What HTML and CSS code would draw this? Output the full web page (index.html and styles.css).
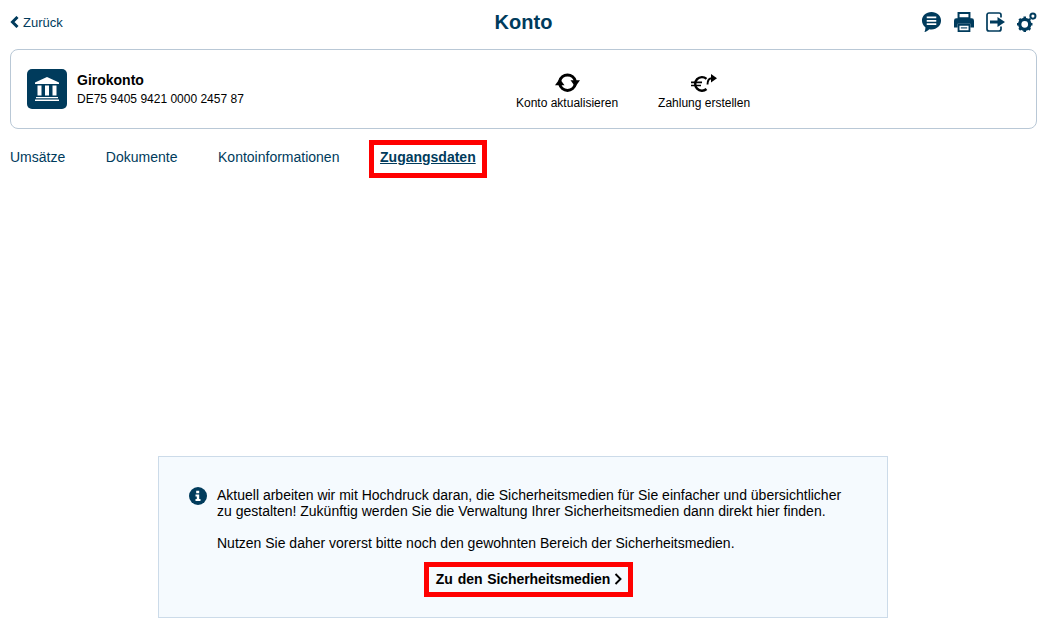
FILE: index.html
```html
<!DOCTYPE html>
<html lang="de">
<head>
<meta charset="utf-8">
<title>Konto</title>
<link rel="stylesheet" href="styles.css">
</head>
<body>
<header class="topbar">
  <a class="back" href="#">
    <svg class="back-icon" viewBox="0 0 9 12" width="9" height="12"><path d="M7.500 1 2.500 6l5 5" fill="none" stroke="#003b5c" stroke-width="3"/></svg>
    <span>Zurück</span>
  </a>
  <h1 class="title">Konto</h1>
  <div class="tools">
    <svg class="tool" viewBox="0 0 22 24" width="21" height="23"><path d="M11 1C5.200 1 1 4.800 1 10c0 3 1.400 5.400 3.600 7 .1 1.700-.3 3.500-1 5 1.900-.4 3.700-1.500 5-3 .8.200 1.600.3 2.400.3 5.800 0 10-4.100 10-9.300S16.800 1 11 1Z" fill="#003b5c"/><path d="M6 6.700h10M6 10.200h10M6 13.700h10" stroke="#fff" stroke-width="1.800"/></svg>
    <svg class="tool" viewBox="0 0 22 22" width="20" height="20"><path d="M5 1h12v6H5z" fill="none" stroke="#003b5c" stroke-width="2.200"/><path d="M2.500 7h17A2.500 2.500 0 0 1 22 9.500V17h-4v-4H4v4H0V9.500A2.500 2.500 0 0 1 2.500 7Z" fill="#003b5c"/><path d="M5 14h12v7H5z" fill="#fff" stroke="#003b5c" stroke-width="2"/><path d="M7.500 17.500h7" stroke="#003b5c" stroke-width="1.200"/></svg>
    <svg class="tool" viewBox="0 0 19 20" width="19" height="20"><path d="M15 5.500V3a2 2 0 0 0-2-2H3a2 2 0 0 0-2 2v14a2 2 0 0 0 2 2h10a2 2 0 0 0 2-2v-2.500" fill="none" stroke="#003b5c" stroke-width="1.700"/><path d="M4 8.500h7.500V5l7.500 5-7.500 5v-3.500H4Z" fill="#003b5c"/></svg>
    <svg class="tool" viewBox="0 0 22 22" width="20" height="20"><circle cx="8.500" cy="13.500" r="5.500" fill="none" stroke="#003b5c" stroke-width="3.600"/><path d="M8.500 5v3M8.500 19v3M0 13.500h3M14 13.500h3M2.500 7.500l2 2M12.500 17.500l2 2M2.500 19.500l2-2M12.500 9.500l2-2" stroke="#003b5c" stroke-width="2.800"/><circle cx="17.500" cy="4.500" r="2.800" fill="none" stroke="#003b5c" stroke-width="2.200"/></svg>
  </div>
</header>

<section class="card">
  <div class="account">
    <div class="bank-logo">
      <svg viewBox="0 0 40 40" width="40" height="40"><path d="M20 8 8 13.500V15h24v-1.500Z" fill="#fff"/><path d="M10.500 16.500h4v10h-4zM18 16.500h4v10h-4zM25.500 16.500h4v10h-4z" fill="#fff"/><path d="M9 28h22v1.300H9zM8 30.500h24v1.500H8z" fill="#fff"/></svg>
    </div>
    <div>
      <div class="account-name">Girokonto</div>
      <div class="iban">DE75 9405 9421 0000 2457 87</div>
    </div>
  </div>
  <div class="actions">
    <a class="action" href="#">
      <svg viewBox="0 -2.200 25 22" width="25" height="22"><path d="M4.700 8A8 8 0 0 1 20.300 8" fill="none" stroke="#000" stroke-width="3"/><path d="M15.500 7 25 7 20.300 13.500Z" fill="#000"/><path d="M20.300 11A8 8 0 0 1 4.700 11" fill="none" stroke="#000" stroke-width="3"/><path d="M0 12 9.500 12 4.700 5.500Z" fill="#000"/></svg>
      <span>Konto aktualisieren</span>
    </a>
    <a class="action" href="#">
      <svg viewBox="0 -3 26 22" width="26" height="22"><path d="M15.500 4.800A6.800 6.800 0 1 0 15.500 15" fill="none" stroke="#000" stroke-width="2.400"/><path d="M0 8.300h11M0 11.500h10" stroke="#000" stroke-width="1.700"/><path d="M16.500 10.500C16.500 6.500 18 4.300 21 4.300" fill="none" stroke="#000" stroke-width="1.900"/><path d="M20 0 26 4.200l-6 4.200Z" fill="#000"/></svg>
      <span>Zahlung erstellen</span>
    </a>
  </div>
</section>

<nav class="tabs">
  <a href="#">Umsätze</a>
  <a href="#">Dokumente</a>
  <a href="#">Kontoinformationen</a>
  <a href="#" class="tab-active">Zugangsdaten</a>
</nav>

<main class="content">
  <section class="notice">
    <svg class="info" viewBox="0 0 18 18" width="18" height="18"><circle cx="9" cy="9" r="9" fill="#003b5c"/><path d="M7.200 3.800h3v2.500h-3zM6.500 7.500h3.700v4.500h1.300v2h-5v-2h1.300V9.500H6.500z" fill="#fff"/></svg>
    <div class="notice-body">
      <p class="para">Aktuell arbeiten wir mit Hochdruck daran, die Sicherheitsmedien für Sie einfacher und übersichtlicher zu gestalten! Zukünftig werden Sie die Verwaltung Ihrer Sicherheitsmedien dann direkt hier finden.</p>
      <p class="para">Nutzen Sie daher vorerst bitte noch den gewohnten Bereich der Sicherheitsmedien.</p>
    </div>
    <a class="media-link" href="#">
      <span>Zu den Sicherheitsmedien</span>
      <svg viewBox="0 0 8 12" width="8" height="12"><path d="M1.500 1 6.500 6l-5 5" fill="none" stroke="#000" stroke-width="1.900"/></svg>
    </a>
  </section>
</main>
</body>
</html>
```
FILE: styles.css
```css
* { box-sizing: border-box; }
html, body { height: 100%; }
body {
  margin: 0;
  padding: 0 8px 0 10px;
  background: #fff;
  color: #000;
  font-family: "Liberation Sans", Arial, sans-serif;
  font-size: 12px;
  overflow: hidden;
}
a { text-decoration: none; color: inherit; }

.topbar {
  position: relative;
  display: flex;
  align-items: center;
  justify-content: space-between;
  height: 49px;
  padding-bottom: 5px;
}
.back {
  display: flex;
  align-items: center;
  gap: 4px;
  color: #003b5c;
  font-size: 13px;
}
.title {
  position: absolute;
  left: 0;
  right: 0;
  top: 10px;
  margin: 0;
  text-align: center;
  color: #003b5c;
  font-size: 20px;
  line-height: 24px;
  font-weight: 700;
  pointer-events: none;
}
.tools { display: flex; align-items: center; gap: 12px; }
.tool { display: block; }

.card {
  display: flex;
  align-items: center;
  height: 80px;
  padding: 0 16px;
  border: 1px solid #b9c8d6;
  border-radius: 8px;
}
.account { display: flex; align-items: center; gap: 10px; width: 489px; }
.bank-logo {
  width: 40px;
  height: 40px;
  border-radius: 5px;
  background: #003b5c;
}
.bank-logo svg { display: block; }
.account-name { font-size: 14px; font-weight: 700; line-height: 18px; margin-bottom: 2px; }
.iban { font-size: 12px; line-height: 17px; }
.actions { display: flex; gap: 40px; }
.action {
  display: flex;
  flex-direction: column;
  align-items: center;
  gap: 3px;
  line-height: 15px;
  padding-top: 3px;
}

.tabs {
  display: flex;
  align-items: flex-start;
  gap: 40.6px;
  height: 56px;
  padding-top: 20px;
  color: #003b5c;
  font-size: 14px;
  line-height: 16px;
}
.tab-active {
  margin: -9px -11px 0;
  padding: 4px 6px 8px;
  border: 5px solid #f00;
  font-weight: 700;
  text-decoration: underline;
}

.content { display: flex; justify-content: center; padding: 271px 1px 0 0; }
.notice {
  display: grid;
  grid-template-columns: 18px 1fr;
  column-gap: 10px;
  width: 730px;
  height: 162px;
  padding: 30px 30px 0;
  background: #f5fafe;
  border: 1px solid #ccdbe9;
  align-content: start;
}
.info { margin-top: 0; }
.para { margin: 0 0 16px; font-size: 14px; line-height: 16px; }
.para:last-child { margin-bottom: 0; }
.notice-body { padding-right: 10px; }
.media-link {
  grid-column: 1 / -1;
  justify-self: center;
  display: flex;
  align-items: center;
  gap: 4px;
  margin: 11px 0 0 11px;
  padding: 4px 6px 5px 7px;
  border: 5px solid #f00;
  font-size: 14px;
  line-height: 16px;
  font-weight: 700;
  letter-spacing: -.1px;
  word-spacing: 1.2px;
}
```
